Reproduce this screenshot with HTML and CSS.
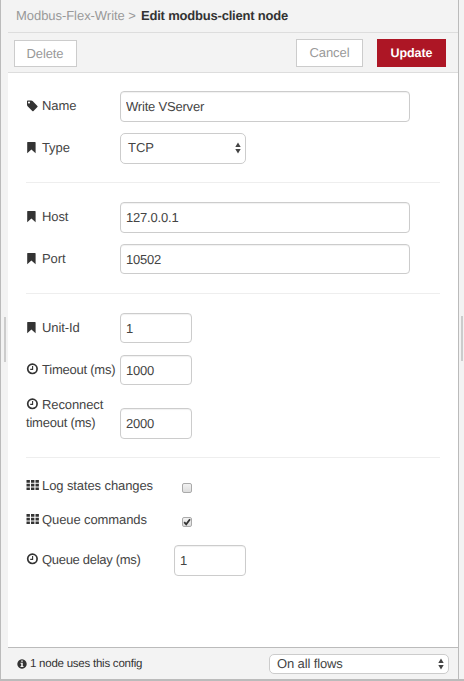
FILE: index.html
```
<!DOCTYPE html>
<html lang="en">
<head>
<meta charset="utf-8">
<title>Edit modbus-client node</title>
<link rel="stylesheet" href="styles.css">
</head>
<body>
<svg width="0" height="0" class="defs">
  <symbol id="tag" viewBox="0 0 12 12"><path fill-rule="evenodd" d="M1 1.2Q1 .5 1.7.5H5.2Q6 .5 6.6 1.1L11.4 5.9Q12 6.5 11.4 7.1L7.5 11Q6.9 11.6 6.3 11L1.6 6.2Q1 5.5 1 4.8ZM3 1.6a1 1 0 1 0 .01 0Z"/></symbol>
  <symbol id="bookmark" viewBox="0 0 12 12"><path d="M1.6 0H9Q9.6 0 9.6.6V11.2L5.4 7.6 1.2 11.2V.6Q1.2 0 1.6 0Z"/></symbol>
  <symbol id="clock" viewBox="0 0 12 12"><circle cx="6.4" cy="5.8" r="4.7" fill="none" stroke="currentColor" stroke-width="1.7"/><path d="M6.6 3.1V6.4H4.2" fill="none" stroke="currentColor" stroke-width="1.1"/></symbol>
  <symbol id="grid" viewBox="0 0 14 12"><path d="M.5 1h3.4v2.7H.5zM5 1h3.4v2.7H5zM9.5 1h3.4v2.7H9.5zM.5 4.7h3.4v2.7H.5zM5 4.7h3.4v2.7H5zM9.5 4.7h3.4v2.7H9.5zM.5 8.4h3.4V11H.5zM5 8.4h3.4V11H5zM9.5 8.4h3.4V11H9.5z"/></symbol>
  <symbol id="info" viewBox="0 0 10 10"><path fill-rule="evenodd" d="M5 .3a4.7 4.7 0 1 0 .01 0ZM4.2 1.5h1.6v1.3H4.2ZM3.5 3.8h2.3v3.2h.7v1h-3v-1h.7V4.8h-.7Z"/></symbol>
  <symbol id="arrows" viewBox="0 0 6 12"><path d="M3 .5 5.7 5H.3ZM3 11.5.3 7H5.7Z"/></symbol>
</svg>
<div class="frame">
  <div class="gutter gutter-left"><span class="grip"></span></div>
  <main class="tray">
    <header class="title"><span class="crumb">Modbus-Flex-Write &gt;</span><strong>Edit modbus-client node</strong></header>
    <div class="toolbar">
      <button class="btn delete">Delete</button>
      <button class="btn cancel">Cancel</button>
      <button class="btn update">Update</button>
    </div>
    <form class="body">
      <section class="group">
        <div class="row"><label><svg class="icon"><use href="#tag"/></svg><span>Name</span></label><input class="field wide" value="Write VServer"></div>
        <div class="row"><label><svg class="icon"><use href="#bookmark"/></svg><span>Type</span></label><div class="select type"><span>TCP</span><svg class="arrows"><use href="#arrows"/></svg></div></div>
      </section>
      <section class="group hosts">
        <div class="row"><label><svg class="icon"><use href="#bookmark"/></svg><span>Host</span></label><input class="field wide" value="127.0.0.1"></div>
        <div class="row short"><label><svg class="icon"><use href="#bookmark"/></svg><span>Port</span></label><input class="field wide" value="10502"></div>
      </section>
      <section class="group">
        <div class="row short unit"><label><svg class="icon"><use href="#bookmark"/></svg><span>Unit-Id</span></label><input class="field small" value="1"></div>
        <div class="row short"><label class="snug"><svg class="icon clock"><use href="#clock"/></svg><span>Timeout (ms)</span></label><input class="field small" value="1000"></div>
        <div class="row tall"><label><svg class="icon clock"><use href="#clock"/></svg><span>Reconnect</span><br><span class="snug">timeout (ms)</span></label><input class="field small" value="2000"></div>
      </section>
      <section class="group last">
        <div class="row check"><label><svg class="icon grid"><use href="#grid"/></svg><span>Log states changes</span></label><span class="box"></span></div>
        <div class="row check"><label><svg class="icon grid"><use href="#grid"/></svg><span>Queue commands</span></label><span class="box"><svg viewBox="0 0 8 8"><path d="M1.2 4.2 3.2 6.3 7 1.2"/></svg></span></div>
        <div class="row delay"><label class="snug"><svg class="icon clock"><use href="#clock"/></svg><span>Queue delay (ms)</span></label><input class="field small" value="1"></div>
      </section>
    </form>
    <footer class="footer">
      <svg class="info"><use href="#info"/></svg><span class="uses">1 node uses this config</span>
      <div class="select flows"><span>On all flows</span><svg class="arrows"><use href="#arrows"/></svg></div>
    </footer>
  </main>
  <div class="gutter gutter-right"><span class="grip"></span></div>
</div>
</body>
</html>
```
FILE: styles.css
```
* { box-sizing: border-box; }
body { margin: 0; font: 13px/18px "Liberation Sans", Arial, sans-serif; color: #444; background: #f3f3f3; overflow: hidden; text-rendering: geometricPrecision; }
.defs { display: block; }
svg { fill: currentColor; }
.frame { display: flex; height: 681px; border-left: 1px solid #bbb; border-bottom: 2px solid #bbb; }
.gutter { background: #f3f3f3; }
.gutter-left { width: 7px; padding: 317px 0 0 3px; }
.gutter-right { width: 5px; padding: 316px 0 0 2px; }
.grip { display: block; width: 2px; height: 45px; background: #ccc; }
.tray { display: flex; flex-direction: column; width: 451px; border-right: 1px solid #bbb; background: #fff; }
.title { height: 33px; padding: 7px 0 0 8px; background: #f3f3f3; border-bottom: 1px solid #ddd; white-space: nowrap; }
.crumb { display: inline-block; width: 125px; color: #999; letter-spacing: -.05px; }
.title strong { color: #333; letter-spacing: -.2px; }
.toolbar { display: flex; align-items: flex-start; height: 40px; padding: 6px 12px 0 6px; background: #f3f3f3; border-bottom: 1px solid #ddd; }
.btn { height: 28px; padding: 0; font: inherit; text-rendering: inherit; letter-spacing: -.1px; color: #999; background: #fff; border: 1px solid #ccc; }
.delete { width: 63px; height: 27px; margin-top: 1px; padding-right: 1px; }
.cancel { width: 67px; margin-left: auto; }
.update { width: 69px; margin-left: 14px; color: #fff; background: #ad1625; border-color: #ad1625; font-weight: bold; font-size: 12.5px; }
.body { flex: 1; padding: 18px 18px 0; }
.group { border-bottom: 1px solid #eee; padding-bottom: 18px; margin-bottom: 19px; }
.hosts { padding-bottom: 19px; }
.group.last { border: 0; }
.row { display: flex; height: 31px; margin-bottom: 11px; }
.row:last-child { margin-bottom: 0; }
.short { height: 30px; }
.unit { margin-bottom: 12px; }
.tall { height: 42px; align-items: flex-end; margin-top: 12px; }
label { width: 94px; padding-top: 6px; white-space: nowrap; letter-spacing: -.1px; }
.tall label { align-self: flex-start; padding-top: 0; margin-top: -1px; }
.snug { letter-spacing: -.23px; }
.delay .snug { letter-spacing: -.3px; }
.icon { width: 12px; height: 12px; margin-right: 4px; vertical-align: -2px; color: #333; }
.icon.clock { vertical-align: -1px; }
.icon.grid { width: 14px; margin-right: 2px; vertical-align: -1px; }
.field { height: 100%; padding: 0 5px; font: inherit; text-rendering: inherit; letter-spacing: -.2px; color: #444; background: #fff; border: 1px solid #ccc; border-radius: 4px; box-shadow: inset 0 1px 1px rgba(0,0,0,.06); outline: 0; }
.tall .field { height: 31px; }
.wide { width: 290px; }
.small { width: 72px; }
.select { display: flex; align-items: center; justify-content: space-between; color: #444; background: #fff; border: 1px solid #ccc; border-radius: 5px; }
.type { width: 126px; padding: 0 4px 1px 7px; }
.arrows { width: 6px; height: 12px; }
.check { height: 18px; margin-bottom: 16px; }
.check label { width: 156px; padding-top: 0; }
.box { width: 10px; height: 10px; margin-top: 6px; border: 1px solid #aaa; border-radius: 2px; background: linear-gradient(#f2f2f2, #ddd); }
.box svg { display: block; width: 8px; height: 8px; fill: none; stroke: #333; stroke-width: 1.8; }
.delay label { width: 148px; padding-top: 6px; }
.footer { display: flex; align-items: center; height: 32px; padding: 0 9px; background: #f3f3f3; border-top: 1px solid #bbb; color: #333; font-size: 11.5px; }
.info { width: 10px; height: 10px; margin-right: 3px; }
.uses { letter-spacing: -.24px; }
.flows { width: 180px; height: 20px; margin-left: auto; padding: 0 4px 0 7px; font-size: 13px; letter-spacing: -.12px; }
```
